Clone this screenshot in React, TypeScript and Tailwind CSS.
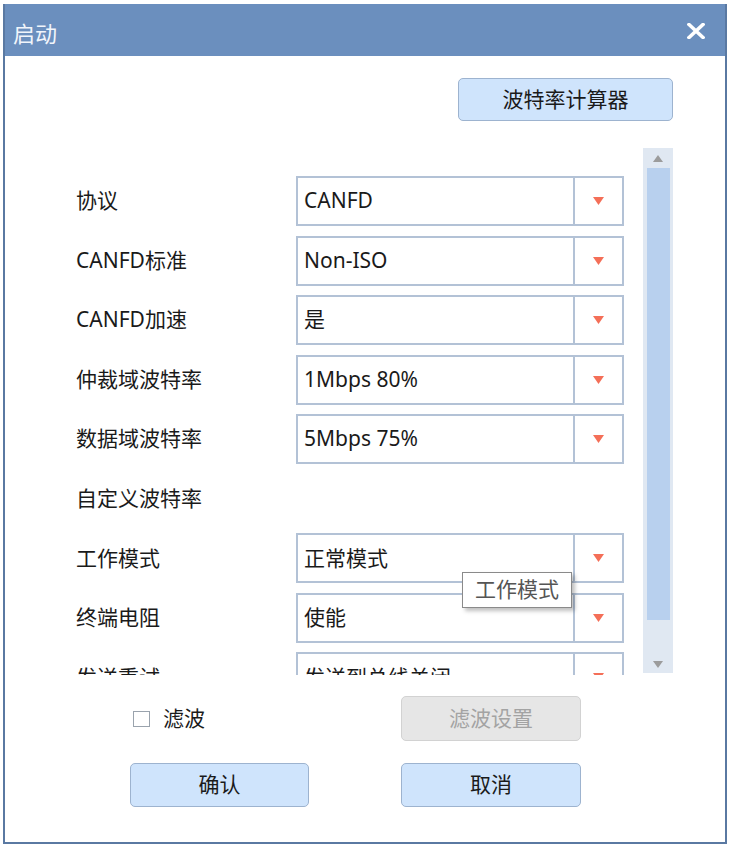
import React from 'react';

const FONT = { fontFamily: '"Noto Sans", "Noto Sans CJK SC", sans-serif' };

interface Row {
  label: string;
  value?: string;
}

const rows: Row[] = [
  { label: '协议', value: 'CANFD' },
  { label: 'CANFD标准', value: 'Non-ISO' },
  { label: 'CANFD加速', value: '是' },
  { label: '仲裁域波特率', value: '1Mbps 80%' },
  { label: '数据域波特率', value: '5Mbps 75%' },
  { label: '自定义波特率' },
  { label: '工作模式', value: '正常模式' },
  { label: '终端电阻', value: '使能' },
  { label: '发送重试', value: '发送到总线关闭' },
];

const Combo: React.FC<{ value: string }> = ({ value }) => (
  <div className="flex w-[328px] h-[50px] border-2 border-[#b3c2d6] bg-white">
    <div className="flex-1 flex items-center pl-[6px] text-[21px] text-[#1a1a1a]">{value}</div>
    <div className="w-[49px] border-l-2 border-[#b3c2d6] flex items-center justify-center">
      <svg width="11" height="8" viewBox="0 0 11 8">
        <path d="M0 0 H11 L5.5 8 Z" fill="#f46f58" />
      </svg>
    </div>
  </div>
);

const App: React.FC = () => {
  return (
    <div className="w-[731px] h-[852px] bg-white pt-[4px] pl-[3px]" style={FONT}>
      <div className="w-[724px] h-[840px] border-2 border-t-0 border-[#5a79a2] flex flex-col">
        {/* title bar */}
        <div className="h-[52px] bg-[#6b8fbe] flex items-center justify-between pl-[8px] pr-[20px] pt-[6px]">
          <span className="text-[22px] text-[#f1f5fb]">启动</span>
          <svg width="18" height="16" viewBox="0 0 18 16" className="mb-[4px]">
            <path d="M2 1.5 L16 14.5 M16 1.5 L2 14.5" stroke="#ffffff" strokeWidth="3.6" strokeLinecap="square" />
          </svg>
        </div>

        <div className="flex justify-end pr-[52px] mt-[22px]">
          <button className="w-[215px] h-[43px] rounded-[5px] border border-[#9db3cf] bg-[#cfe4fc] text-[21px] text-[#1a1a1a]">
            波特率计算器
          </button>
        </div>

        {/* scroll region */}
        <div className="relative mt-[27px] h-[527px] overflow-hidden flex">
          <div className="pl-[71px] pt-[28px] flex flex-col gap-[9.55px]">
            {rows.map((r) => (
              <div key={r.label} className="flex items-center h-[50px] shrink-0">
                <div className="w-[220px] text-[21px] text-[#1a1a1a]">{r.label}</div>
                {r.value && <Combo value={r.value} />}
              </div>
            ))}
          </div>
          <div className="ml-[19px] w-[30px] h-[525px] bg-[#e0e8f2] flex flex-col items-center">
            <div className="h-[20px] flex items-center justify-center">
              <svg width="10" height="7" viewBox="0 0 10 7">
                <path d="M0 7 H10 L5 0 Z" fill="#9c9c9c" />
              </svg>
            </div>
            <div className="w-[23px] h-[452px] bg-[#b8d0ee]" />
            <div className="flex-1 flex items-end justify-center pb-[5px]">
              <svg width="10" height="7" viewBox="0 0 10 7">
                <path d="M0 0 H10 L5 7 Z" fill="#9c9c9c" />
              </svg>
            </div>
          </div>

          {/* tooltip */}
          <div className="absolute left-[457px] top-[424px] w-[110px] h-[36px] border border-[#8a8a8a] bg-white shadow-[3px_3px_4px_rgba(0,0,0,0.25)] flex items-center justify-center text-[21px] text-[#555555]">
            工作模式
          </div>
        </div>

        {/* filter row */}
        <div className="flex items-center mt-[21px] h-[45px]">
          <div className="w-[396px] pl-[128px] flex items-center gap-[13px]">
            <div className="w-[17px] h-[16px] border border-[#9aa3ad] bg-white" />
            <span className="text-[21px] text-[#1a1a1a]">滤波</span>
          </div>
          <button className="w-[180px] h-[45px] rounded-[5px] border border-[#d2d2d2] bg-[#e6e6e6] text-[21px] text-[#a3a3a3]">
            滤波设置
          </button>
        </div>

        {/* action row */}
        <div className="flex items-center mt-[22px] h-[44px] pl-[125px] gap-[92px]">
          <button className="w-[179px] h-[44px] rounded-[5px] border border-[#9db3cf] bg-[#cfe4fc] text-[21px] text-[#1a1a1a]">
            确认
          </button>
          <button className="w-[180px] h-[44px] rounded-[5px] border border-[#9db3cf] bg-[#cfe4fc] text-[21px] text-[#1a1a1a]">
            取消
          </button>
        </div>
      </div>
    </div>
  );
};

export default App;
